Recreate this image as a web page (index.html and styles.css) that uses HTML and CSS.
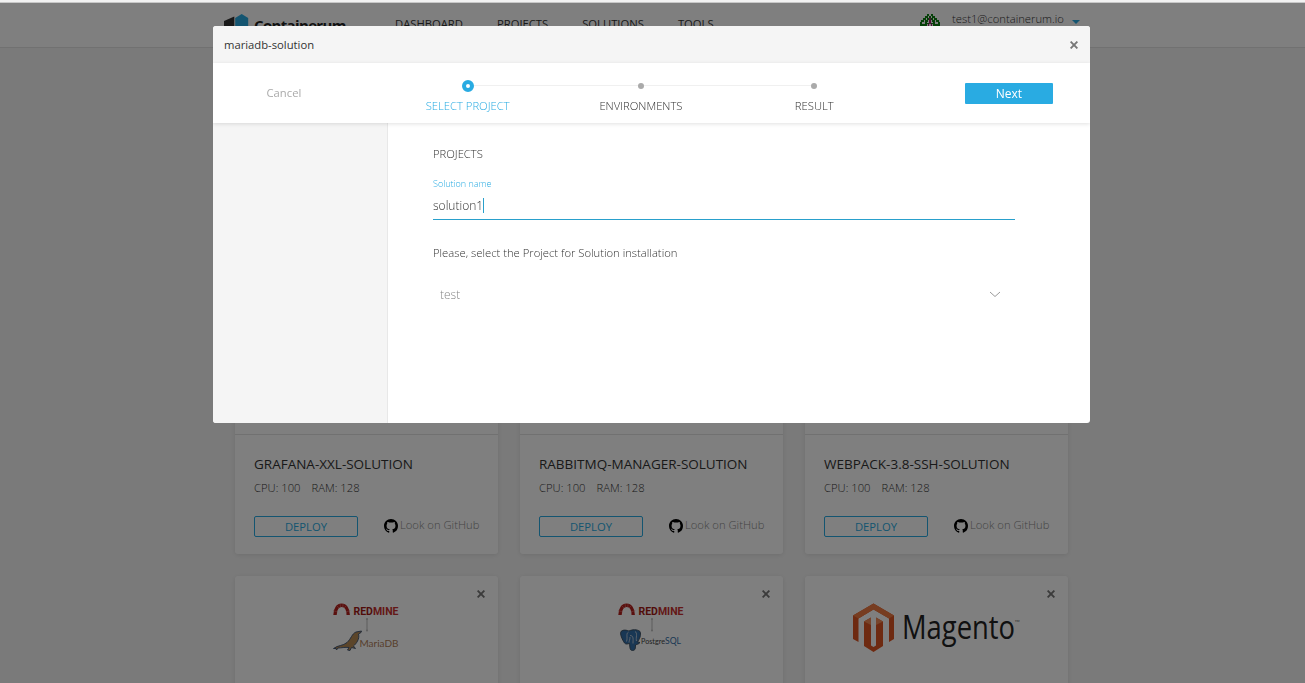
FILE: index.html
```html
<!DOCTYPE html>
<html lang="en">
<head>
<meta charset="utf-8">
<title>Containerum</title>
<link rel="stylesheet" href="styles.css">
</head>
<body>
<svg class="defs" width="0" height="0">
  <symbol id="github" viewBox="0 0 16 16"><path d="M8 0C3.58 0 0 3.58 0 8c0 3.54 2.29 6.53 5.47 7.59.4.07.55-.17.55-.38 0-.19-.01-.82-.01-1.49-2.01.37-2.53-.49-2.69-.94-.09-.23-.48-.94-.82-1.13-.28-.15-.68-.52-.01-.53.63-.01 1.08.58 1.23.82.72 1.21 1.87.87 2.33.66.07-.52.28-.87.51-1.07-1.78-.2-3.64-.89-3.64-3.95 0-.87.31-1.59.82-2.15-.08-.2-.36-1.02.08-2.12 0 0 .67-.21 2.2.82.64-.18 1.32-.27 2-.27s1.36.09 2 .27c1.53-1.04 2.2-.82 2.2-.82.44 1.1.16 1.92.08 2.12.51.56.82 1.27.82 2.15 0 3.07-1.87 3.75-3.65 3.95.29.25.54.73.54 1.48 0 1.07-.01 1.93-.01 2.2 0 .21.15.46.55.38A8.01 8.01 0 0 0 16 8c0-4.42-3.58-8-8-8z"/></symbol>
  <symbol id="cross" viewBox="0 0 8 8"><path d="M.6 .6L7.400 7.400M7.400 .6L.6 7.400" stroke="currentColor" stroke-width="1.900"/></symbol>
  <symbol id="redmine" viewBox="0 0 68 30">
    <path d="M2 12C2 5.500 5 2.300 8.600 2.300S15.200 5.500 15.200 12" fill="none" stroke="#b5201d" stroke-width="3.400"/>
    <path d="M0 7.500l4.500 1.500M3 2l3 3M7 .5l.5 3.500M10.200 .5l-.5 3.500M14 2l-3 3M17.300 7.500l-4.500 1.500" stroke="#e08a86" stroke-width=".5"/>
    <text class="redmine-text" x="20.500" y="12.200" textLength="45" lengthAdjust="spacingAndGlyphs"><tspan fill="#a31915">RED</tspan><tspan fill="#c8312e">MINE</tspan></text>
    <path d="M34 16v11" stroke="#aaa" stroke-width=".8"/><circle cx="34" cy="16" r="1" fill="#bbb"/><circle cx="34" cy="27.500" r="1" fill="#bbb"/>
  </symbol>
</svg>

<div class="topline"></div>
<header class="site-header">
  <div class="brand">
    <svg width="26" height="28" viewBox="0 0 26 28"><path d="M0 7L10.300 2.500V26L0 21z" fill="#333"/><path d="M11.200 4L17.700 0l6.500 4v18l-6.500 4-6.500-4z" fill="#29abe2"/></svg>
    <span class="brand-name">Containerum</span>
  </div>
  <nav class="nav"><a>DASHBOARD</a><a>PROJECTS</a><a>SOLUTIONS</a><a>TOOLS</a></nav>
  <div class="user">
    <svg class="avatar" width="20" height="20" viewBox="0 0 20 20" shape-rendering="crispEdges">
      <path fill="#0a8010" d="M7 0h2v2H7zM11 0h2v2h-2zM5 2h3v2H5zM9 2h2v2H9zM12 2h3v2h-3zM3 4h3v2H3zM7 4h2v2H7zM11 4h2v2h-2zM14 4h3v2h-3zM1 6h3v2H1zM5 6h3v2H5zM12 6h3v2h-3zM16 6h3v2h-3zM0 8h2v2H0zM5 8h2v2H5zM7 9h2v1H7zM11 9h2v1h-2zM13 8h2v2h-2zM18 8h2v2h-2zM0 10h7v2H0zM13 10h7v2h-7z"/>
      <path fill="#a02070" d="M9 4h2v6H9zM8 10h1v2H8zM11 10h1v2h-1z"/>
    </svg>
    <span class="email">test1@containerum.io</span>
    <i class="caret"></i>
  </div>
</header>

<main class="catalog">
  <article class="card">
    <div class="card-cover"></div>
    <h3>GRAFANA-XXL-SOLUTION</h3>
    <p class="specs"><span>CPU: 100</span><span>RAM: 128</span></p>
    <div class="actions"><a class="deploy">DEPLOY</a><a class="github"><svg width="14" height="14"><use href="#github"/></svg>Look on GitHub</a></div>
  </article>
  <article class="card">
    <div class="card-cover"></div>
    <h3>RABBITMQ-MANAGER-SOLUTION</h3>
    <p class="specs"><span>CPU: 100</span><span>RAM: 128</span></p>
    <div class="actions"><a class="deploy">DEPLOY</a><a class="github"><svg width="14" height="14"><use href="#github"/></svg>Look on GitHub</a></div>
  </article>
  <article class="card">
    <div class="card-cover"></div>
    <h3>WEBPACK-3.8-SSH-SOLUTION</h3>
    <p class="specs"><span>CPU: 100</span><span>RAM: 128</span></p>
    <div class="actions"><a class="deploy">DEPLOY</a><a class="github"><svg width="14" height="14"><use href="#github"/></svg>Look on GitHub</a></div>
  </article>

  <article class="card">
    <div class="card-cover">
      <svg class="remove" width="8" height="8"><use href="#cross"/></svg>
      <svg class="logo" width="68" height="50" viewBox="0 0 68 50">
        <use href="#redmine" width="68" height="30"/>
        <path d="M.5 45.500C5 42 10 43 14 39.500C18 36 19 30.500 23 29L28.500 28L28 29.500L25.500 31C27 36 23 41 20.500 43L22.500 45.500L18.500 44.500L17 47.500L14.500 47L16 44.500C12 44 8 45 5 45L3.500 47L3 45.500z" fill="#b68a55" stroke="#3b5170" stroke-width=".9"/>
        <text class="maria-text" x="26.500" y="43.500" textLength="39" lengthAdjust="spacingAndGlyphs">MariaDB</text>
      </svg>
    </div>
  </article>
  <article class="card">
    <div class="card-cover">
      <svg class="remove" width="8" height="8"><use href="#cross"/></svg>
      <svg class="logo" width="68" height="50" viewBox="0 0 68 50">
        <use href="#redmine" width="68" height="30"/>
        <path d="M3 28.500C6 26 9 27.500 11 28C14 26.500 19 26 22 28.500C23.500 32 21.500 36 19.500 39L22 39.500C20.500 41.500 18 41.500 17.500 42C17.500 45 17.500 47.500 14.500 47.500C11.500 47.500 12 44 11.500 40.500C9 41 8 41.500 6.500 40C4.500 37 1.500 31 3 28.500z" fill="#336fa8" stroke="#384858" stroke-width=".9"/>
        <path d="M10.500 29C7.500 31 10 34 8.500 38.500M17 28.500C20 30 17.500 35 18.500 38M12 34c0 3-1 4-1 5.500M12 32.500c4 0 3 4 3 8" fill="none" stroke="#d5d8de" stroke-width=".8"/>
        <text class="pg-text" x="23" y="40.500" textLength="40" lengthAdjust="spacingAndGlyphs">Postgre<tspan class="sql">SQL</tspan></text>
      </svg>
    </div>
  </article>
  <article class="card">
    <div class="card-cover">
      <svg class="remove" width="8" height="8"><use href="#cross"/></svg>
      <svg class="logo" width="168" height="50" viewBox="0 0 168 50">
        <path d="M0 12.500L20.500 .5L41 12.500V36L36 39V15.500L20.500 6.500L5.500 15.500V39L0 36z" fill="#dd5522"/>
        <path d="M0 12.500L20.500 .5L41 12.500L36 15.500L20.500 6.500L5.500 15.500z" fill="#ee7b43"/>
        <path d="M11 18.500L18 14.500V42.500L20.500 44L23 42.500V14.500L30 18.500V43L20.500 49L11 43z" fill="#dd5522"/>
        <path d="M11 18.500L18 14.500V22zM30 18.500L23 14.500V22z" fill="#f08a57"/>
        <text class="magento-text" x="49" y="35.500" textLength="113" lengthAdjust="spacingAndGlyphs">Magento</text>
        <text class="tm" x="161.500" y="22">™</text>
      </svg>
    </div>
  </article>
</main>

<div class="overlay">
  <section class="modal">
    <header class="modal-header"><span>mariadb-solution</span><svg width="8" height="8"><use href="#cross"/></svg></header>
    <div class="wizard">
      <a class="cancel">Cancel</a>
      <ol class="steps">
        <li class="step active"><i></i><span>SELECT PROJECT</span></li>
        <li class="step"><i></i><span>ENVIRONMENTS</span></li>
        <li class="step"><i></i><span>RESULT</span></li>
      </ol>
      <a class="next">Next</a>
    </div>
    <div class="modal-body">
      <aside class="side"></aside>
      <div class="form">
        <h2>PROJECTS</h2>
        <label>Solution name</label>
        <div class="field"><span>solution1</span><i class="cursor"></i></div>
        <p class="hint">Please, select the Project for Solution installation</p>
        <div class="select"><span>test</span><svg width="12" height="7" viewBox="0 0 12 7"><path d="M1 1L6 5.500L11 1" fill="none" stroke="#999"/></svg></div>
      </div>
    </div>
  </section>
</div>
</body>
</html>
```
FILE: styles.css
```css
* { box-sizing: border-box; }
html { overflow: hidden; }
body { margin: 0; height: 683px; overflow: hidden; background: #f5f5f5; font-family: "Open Sans", sans-serif; font-weight: 300; color: #333; }
h2, h3, p, ol { margin: 0; padding: 0; font-weight: inherit; }
.defs { position: absolute; }
.topline { height: 3px; background: #f2f2f2; border-bottom: 1px solid #c8c8c8; }

.site-header { height: 45px; padding: 0 225px 0 224px; display: flex; align-items: flex-start; background: #fff; border-bottom: 1px solid #e2e2e2; }
.brand { display: flex; width: 171px; padding-top: 11px; gap: 4px; }
.brand-name { font: 700 15px/23px "Open Sans", sans-serif; letter-spacing: -.65px; color: #222; }
.nav { display: flex; gap: 34px; padding-top: 13px; font-size: 11.25px; line-height: 16px; font-weight: 400; }
.user { display: flex; margin-left: auto; padding-top: 8px; font-size: 11.25px; line-height: 16px; color: #333; }
.avatar { margin: 3px 12px 0 0; }
.email { width: 112px; white-space: nowrap; }
.caret { margin: 9px 0 0 8px; border: 4px solid transparent; border-top-color: #29abe2; border-bottom: 0; width: 8px; height: 4px; }

.catalog { display: grid; grid-template-columns: repeat(3, 263px); grid-auto-rows: 240px; gap: 22px; padding: 266px 0 0 235px; }
.card { background: #fff; border-radius: 3px; box-shadow: 0 1px 5px rgba(0,0,0,.1); }
.card-cover { display: flex; justify-content: center; position: relative; height: 121px; padding-top: 27px; border-bottom: 1px solid #e3e3e3; }
.remove { position: absolute; top: 14px; right: 13px; color: #777; }
.card h3 { margin: 19px 0 0 19px; font-size: 13.5px; line-height: 20px; font-weight: 400; color: #333; }
.specs { display: flex; gap: 11px; margin: 6px 0 0 19px; font-size: 11.25px; line-height: 16px; color: #333; }
.actions { display: flex; margin: 20px 0 0 19px; gap: 26px; }
.deploy { width: 104px; height: 21px; border: 1px solid #29abe2; border-radius: 2px; color: #29abe2; font-size: 11.25px; line-height: 20px; font-weight: 400; text-align: center; }
.github { display: flex; gap: 2px; font-size: 11.25px; line-height: 18px; color: #888; white-space: nowrap; }
.github svg { margin-top: 3px; fill: #000; }

.redmine-text { font: 700 11.5px "Roboto", sans-serif; }
.maria-text { font: 400 10px "Lato", sans-serif; fill: #b08058; }
.pg-text { font: 400 7.5px "Lato", sans-serif; fill: #444; }
.sql { font-size: 9px; fill: #336fa8; }
.magento-text { font: 400 33px "Open Sans", sans-serif; fill: #222; }
.tm { font: 400 7px "Lato", sans-serif; fill: #777; }

.overlay { position: fixed; inset: 3px 0 0; padding-top: 23px; background: rgba(0,0,0,.5); }
.modal { width: 877px; height: 397px; margin-left: 213px; display: flex; flex-direction: column; background: #fff; border-radius: 3px; overflow: hidden; }
.modal-header { display: flex; justify-content: space-between; align-items: center; height: 37px; padding: 0 12px 0 11px; background: #f5f5f5; font-size: 11.25px; font-weight: 400; color: #333; }
.modal-header svg { color: #777; }
.wizard { display: flex; height: 60px; position: relative; z-index: 1; box-shadow: 0 1px 4px rgba(0,0,0,.12); background: #fff; }
.cancel { width: 168px; padding: 21px 0 0 53.5px; font-size: 11.25px; line-height: 18px; font-weight: 400; color: #aaa; }
.steps { display: grid; grid-template-columns: repeat(3, 173.300px); list-style: none; flex: none; }
.step { display: flex; flex-direction: column; align-items: center; padding-top: 17px; font-size: 11.25px; line-height: 16px; color: #333; background: linear-gradient(#f0f0f0, #f0f0f0) 0 22px / 100% 1px no-repeat; }
.step:first-child { background-position: 87px 22px; }
.step:last-child { background-size: 50% 1px; }
.step i { width: 6px; height: 6px; margin: 3px 0 9px; border-radius: 50%; background: #aaa; }
.step.active i { width: 12px; height: 12px; margin: -.5px 0 6.5px; border: 4.5px solid #29abe2; background: #fff; }
.step.active { color: #29abe2; }
.next { width: 88px; height: 21px; margin: 20px 0 0 64px; border-radius: 1px; background: #29abe2; color: #fff; font-size: 12px; line-height: 21px; font-weight: 400; text-align: center; }
.modal-body { display: flex; flex: 1; }
.side { width: 175px; background: #f5f5f5; border-right: 1px solid #e8e8e8; }
.form { width: 627px; padding: 23px 0 0 45px; color: #333; }
.form h2 { font-size: 11.25px; line-height: 16px; }
.form label { display: block; margin-top: 15px; font-size: 9px; line-height: 13px; color: #29abe2; }
.field { display: flex; align-items: center; height: 30px; padding-top: 1px; border-bottom: 1px solid #29a0cc; font-size: 12px; }
.cursor { width: 1px; height: 15px; background: #29a0cc; }
.hint { margin-top: 25px; font-size: 11.25px; line-height: 16px; }
.select { display: flex; justify-content: space-between; align-items: center; margin-top: 23px; padding: 0 14px 0 7px; height: 20px; font-size: 12px; color: #888; }
```
